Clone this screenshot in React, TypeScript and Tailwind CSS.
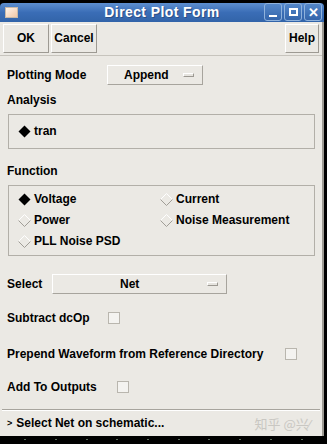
import { ReactNode } from 'react';

const font = { fontFamily: '"Liberation Sans", Arial, sans-serif' };

function Diamond({ on }: { on?: boolean }) {
  return (
    <svg width="13" height="13" viewBox="0 0 13 13" className="shrink-0">
      {on ? (
        <polygon points="6.5,0.5 12.5,6.5 6.5,12.5 0.5,6.5" fill="#000" />
      ) : (
        <>
          <polyline points="0.5,6.5 6.5,0.5 12.5,6.5" fill="none" stroke="#fff" />
          <polyline points="0.5,6.5 6.5,12.5 12.5,6.5" fill="none" stroke="#a09d96" />
        </>
      )}
    </svg>
  );
}

function Check() {
  return <span className="inline-block w-[12px] h-[12px] bg-[#f4f3f0] border border-[#b9b6ae] shrink-0" />;
}

function MenuBar() {
  return <span className="inline-block w-[11px] h-[4px] bg-[#e6e4df] border-t border-l border-[#fff] border-b border-r border-b-[#9c9992] border-r-[#9c9992]" />;
}

function Btn({ children, className }: { children: ReactNode; className?: string }) {
  return (
    <div
      className={`h-[29px] flex items-center justify-center bg-[#ebe9e4] border border-t-white border-l-white border-b-[#9d9a93] border-r-[#9d9a93] ${className ?? ''}`}
    >
      {children}
    </div>
  );
}

function WinBtn({ children }: { children: ReactNode }) {
  return (
    <div className="w-[18px] h-[18px] rounded-[3px] border border-[#8fb2dc] bg-gradient-to-b from-[#5487c9] to-[#3465ab] flex items-center justify-center">
      {children}
    </div>
  );
}

export default function App() {
  return (
    <div className="w-[327px] h-[444px] bg-black flex flex-col text-[12px] font-bold text-black" style={font}>
      {/* title bar */}
      <div className="mt-[3px] h-[25px] mr-[3px] rounded-t-[4px] bg-gradient-to-b from-[#5d8fd0] via-[#3a6db6] to-[#3264a9] flex items-center relative">
        <div className="ml-[5px] w-[13px] h-[11px] bg-gradient-to-br from-[#fff4ea] to-[#f0c8a8] border border-[#c8b9a8]" />
        <div className="absolute inset-0 flex items-center justify-center text-white text-[14px] tracking-[0.4px] [text-shadow:1px_1px_0_#2c4f85]">
          Direct Plot Form
        </div>
        <div className="ml-auto mr-[2px] flex gap-[2px] relative">
          <WinBtn>
            <span className="w-[8px] h-[2px] bg-white mt-[8px]" />
          </WinBtn>
          <WinBtn>
            <span className="w-[9px] h-[8px] border-2 border-white border-t-[2px]" />
          </WinBtn>
          <WinBtn>
            <span className="text-white text-[13px] leading-none font-bold">✕</span>
          </WinBtn>
        </div>
      </div>

      {/* window body */}
      <div className="flex-1 mr-[3px] bg-[#ebe9e4] border-r-2 border-[#9d9a93] flex flex-col">
        {/* button row */}
        <div className="flex items-center px-[3px] pt-[2px] pb-[2px] border-b border-[#c7c4bd]">
          <Btn className="w-[46px]">OK</Btn>
          <Btn className="w-[46px] ml-[2px]">Cancel</Btn>
          <Btn className="w-[34px] ml-auto">Help</Btn>
        </div>

        <div className="px-[7px] flex flex-col">
          <div className="flex items-center h-[28px] mt-[5px]">
            <span className="w-[100px]">Plotting Mode</span>
            <div className="w-[96px] h-[20px] flex items-center border border-t-white border-l-white border-b-[#a7a49d] border-r-[#a7a49d] bg-[#ebe9e4]">
              <span className="ml-[16px]">Append</span>
              <span className="ml-auto mr-[8px] flex"><MenuBar /></span>
            </div>
          </div>

          <div className="mt-[3px] h-[16px] leading-[16px]">Analysis</div>
          <div className="mt-[6px] ml-[1px] w-[307px] h-[35px] border border-[#b2afa8] flex items-center pl-[9px] gap-[3px]">
            <Diamond on />
            <span>tran</span>
          </div>

          <div className="mt-[14px] h-[16px] leading-[16px]">Function</div>
          <div className="mt-[6px] ml-[1px] w-[307px] h-[71px] border border-[#b2afa8] grid grid-cols-[142px_1fr] grid-rows-3 pl-[9px] pt-[3px] pb-[3px]">
            <div className="flex items-center gap-[3px]"><Diamond on /><span>Voltage</span></div>
            <div className="flex items-center gap-[3px]"><Diamond /><span>Current</span></div>
            <div className="flex items-center gap-[3px]"><Diamond /><span>Power</span></div>
            <div className="flex items-center gap-[3px]"><Diamond /><span>Noise Measurement</span></div>
            <div className="flex items-center gap-[3px]"><Diamond /><span>PLL Noise PSD</span></div>
          </div>

          <div className="flex items-center mt-[18px] h-[20px]">
            <span className="w-[45px]">Select</span>
            <div className="w-[175px] h-[20px] flex items-center border border-t-white border-l-white border-b-[#a7a49d] border-r-[#a7a49d]">
              <span className="ml-[67px]">Net</span>
              <span className="ml-auto mr-[8px] flex"><MenuBar /></span>
            </div>
          </div>

          <div className="flex items-center mt-[14px] h-[20px]">
            <span className="w-[101px]">Subtract dcOp</span>
            <Check />
          </div>

          <div className="flex items-center mt-[16px] h-[20px]">
            <span className="w-[278px]">Prepend Waveform from Reference Directory</span>
            <Check />
          </div>

          <div className="flex items-center mt-[13px] h-[20px]">
            <span className="w-[110px]">Add To Outputs</span>
            <Check />
          </div>
        </div>

        <div className="mt-[12px] mx-[2px] border-t border-[#a7a49d] border-b border-b-white" />
        <div className="flex items-center h-[25px] px-[7px]">
          <span className="text-[9px] mr-[4px]">&gt;</span>
          <span>Select Net on schematic...</span>
          <span
            className="ml-auto mr-[4px] text-[#c9c7c2] font-normal text-[13px]"
            style={{ fontFamily: '"Noto Sans CJK SC", "Liberation Sans", sans-serif' }}
          >
            知乎 @兴⁄
          </span>
        </div>
      </div>

      {/* bottom strip */}
      <div className="h-[11px] bg-black flex items-center justify-around px-[10px]">
        {Array.from({ length: 10 }).map((_, i) => (
          <span key={i} className="w-[2px] h-[1px] bg-[#5a6a5a]" />
        ))}
      </div>
    </div>
  );
}
